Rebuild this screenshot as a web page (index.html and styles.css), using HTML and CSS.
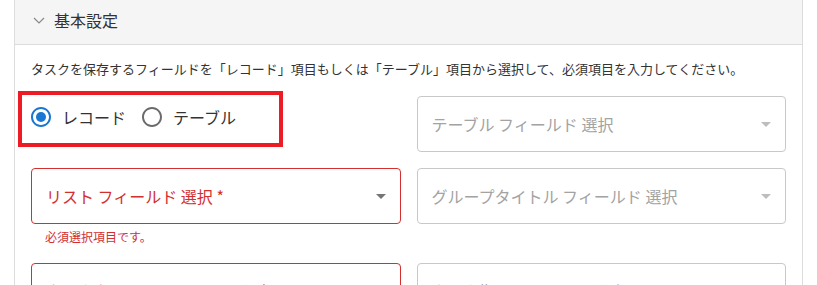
FILE: index.html
```html
<!DOCTYPE html>
<html lang="ja">
<head>
<meta charset="utf-8">
<link rel="stylesheet" href="styles.css">
</head>
<body>
<section class="panel">
  <header class="panel-head">
    <svg class="chev" width="12" height="7" viewBox="0 0 12 7"><polyline points="1,1 6,6 11,1" fill="none" stroke="#888" stroke-width="1.2"/></svg>
    <span class="title">基本設定</span>
  </header>
  <div class="panel-body">
    <p class="desc">タスクを保存するフィールドを「レコード」項目もしくは「テーブル」項目から選択して、必須項目を入力してください。</p>
    <div class="grid">
      <div class="cell">
        <div class="radios">
          <span class="highlight"></span>
          <label class="radio">
            <span class="radio-icon">
              <svg width="24" height="24" viewBox="0 0 24 24"><path fill="#1976d2" d="M12 2C6.48 2 2 6.480 2 12s4.48 10 10 10 10-4.48 10-10S17.52 2 12 2zm0 18c-4.42 0-8-3.58-8-8s3.58-8 8-8 8 3.58 8 8-3.58 8-8 8z"/><circle cx="12" cy="12" r="5" fill="#1976d2"/></svg>
            </span>
            <span class="radio-label">レコード</span>
          </label>
          <label class="radio">
            <span class="radio-icon">
              <svg width="24" height="24" viewBox="0 0 24 24"><path fill="#6b6b6b" d="M12 2C6.48 2 2 6.48 2 12s4.48 10 10 10 10-4.48 10-10S17.52 2 12 2zm0 18c-4.42 0-8-3.58-8-8s3.580-8 8-8 8 3.58 8 8-3.58 8-8 8z"/></svg>
            </span>
            <span class="radio-label">テーブル</span>
          </label>
        </div>
      </div>
      <div class="cell">
        <div class="select disabled">
          <span class="ph">テーブル フィールド 選択</span>
          <svg class="arrow" width="24" height="24" viewBox="0 0 24 24"><path d="M7 10l5 5 5-5z"/></svg>
        </div>
      </div>
      <div class="cell">
        <div class="select error">
          <span class="ph">リスト フィールド 選択 *</span>
          <svg class="arrow" width="24" height="24" viewBox="0 0 24 24"><path d="M7 10l5 5 5-5z"/></svg>
        </div>
        <p class="helper">必須選択項目です。</p>
      </div>
      <div class="cell">
        <div class="select disabled">
          <span class="ph">グループタイトル フィールド 選択</span>
          <svg class="arrow" width="24" height="24" viewBox="0 0 24 24"><path d="M7 10l5 5 5-5z"/></svg>
        </div>
      </div>
      <div class="cell">
        <div class="select error">
          <span class="ph">タスクタイトル フィールド 選択 *</span>
          <svg class="arrow" width="24" height="24" viewBox="0 0 24 24"><path d="M7 10l5 5 5-5z"/></svg>
        </div>
      </div>
      <div class="cell">
        <div class="select disabled">
          <span class="ph">タスク期間 フィールド 選択</span>
          <svg class="arrow" width="24" height="24" viewBox="0 0 24 24"><path d="M7 10l5 5 5-5z"/></svg>
        </div>
      </div>
    </div>
  </div>
</section>
</body>
</html>
```

FILE: styles.css
```css
* { box-sizing: border-box; }
html, body {
  margin: 0;
  padding: 0;
  background: #fff;
  font-family: "Noto Sans CJK JP", "Noto Sans", sans-serif;
  color: #333;
  overflow: hidden;
}
.panel {
  margin-left: 14px;
  width: 789px;
  border-left: 1px solid #ddd;
  border-right: 1px solid #ddd;
}
.panel-head {
  height: 45px;
  background: #f5f5f5;
  border-bottom: 1px solid #dcdcdc;
  display: flex;
  align-items: center;
  padding: 0 0 5px 18px;
}
.chev { display: block; margin-right: 9px; margin-top: 1px; }
.title { font-size: 16px; line-height: 20px; color: #333; }
.panel-body { padding: 15px 16px 0 16px; }
.desc {
  margin: 0 0 18px 0;
  font-size: 13px;
  line-height: 18px;
  color: #333;
  white-space: nowrap;
}
.grid {
  display: grid;
  grid-template-columns: 1fr 1fr;
  column-gap: 16px;
  row-gap: 16px;
  align-items: start;
}
.radios {
  position: relative;
  display: flex;
  align-items: center;
  height: 42px;
}
.highlight {
  position: absolute;
  left: -13px;
  top: -5px;
  width: 265px;
  height: 56px;
  border: 4px solid #ed1c24;
}
.radio {
  display: flex;
  align-items: center;
  margin-left: -11px;
  margin-right: 16px;
}
.radio-icon { display: flex; padding: 9px; }
.radio-icon svg { display: block; }
.radio-label { font-size: 16px; line-height: 24px; color: #333; }
.select {
  position: relative;
  height: 56px;
  border: 1px solid #c4c4c4;
  border-radius: 4px;
  display: flex;
  align-items: center;
  padding: 0 14px;
}
.select .ph { font-size: 16px; line-height: 24px; white-space: nowrap; }
.select .arrow { position: absolute; right: 7px; top: 15px; }
.select.disabled { border-color: #c8c8c8; }
.select.disabled .ph { color: #a3a3a3; }
.select.disabled .arrow path { fill: #bdbdbd; }
.select.error { border-color: #d32f2f; }
.select.error .ph { color: #d32f2f; }
.select.error .arrow path { fill: #757575; }
.helper {
  margin: 3px 14px 0 14px;
  font-size: 12px;
  line-height: 20px;
  color: #d32f2f;
}
```
